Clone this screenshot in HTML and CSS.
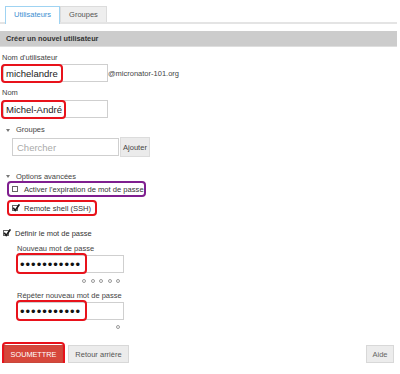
FILE: index.html
```html
<!DOCTYPE html>
<html lang="fr">
<head>
<meta charset="utf-8">
<title>Créer un nouvel utilisateur</title>
<link rel="stylesheet" href="styles.css">
</head>
<body>
<div class="page">
  <div class="tabs">
    <div class="tab active">Utilisateurs</div>
    <div class="tab">Groupes</div>
  </div>
  <div class="header">Créer un nouvel utilisateur</div>
  <div class="form">
    <div class="label l-user">Nom d'utilisateur</div>
    <div class="row r-user">
      <span class="field">
        <input class="input w-user" type="text" value="michelandre">
        <span class="hl hl-user"></span>
      </span>
      <span class="domain">@micronator-101.org</span>
    </div>
    <div class="label l-nom">Nom</div>
    <div class="row r-nom">
      <span class="field">
        <input class="input w-user" type="text" value="Michel-André">
        <span class="hl hl-nom"></span>
      </span>
    </div>

    <div class="section s-groupes"><span class="tri"></span>Groupes</div>
    <div class="groupes-row">
      <input class="input search" type="text" placeholder="Chercher">
      <button class="btn btn-add" type="button">Ajouter</button>
    </div>

    <div class="section s-options"><span class="tri"></span>Options avancées</div>
    <div class="opt opt-purple"><span class="cb"></span>Activer l'expiration de mot de passe</div>
    <div class="opt opt-red"><span class="cb"><svg viewBox="0 0 8 8" width="8" height="8"><path d="M1.2 3.8 L3.2 6.4 L7.4 0.4" fill="none" stroke="#1a1a1a" stroke-width="1.7"/></svg></span>Remote shell (SSH)</div>

    <div class="setpw"><span class="cb"><svg viewBox="0 0 8 8" width="8" height="8"><path d="M1.2 3.8 L3.2 6.4 L7.4 0.4" fill="none" stroke="#1a1a1a" stroke-width="1.7"/></svg></span>Définir le mot de passe</div>

    <div class="pw">
      <div class="label l-pw1">Nouveau mot de passe</div>
      <div class="row r-pw1">
        <span class="field">
          <input class="input pass" type="password" value="michelandre">
          <span class="hl hl-pw"></span>
        </span>
      </div>
      <div class="strength s1"><i></i><i></i><i></i><i></i><i></i></div>
      <div class="label l-pw2">Répéter nouveau mot de passe</div>
      <div class="row r-pw2">
        <span class="field">
          <input class="input pass" type="password" value="michelandre">
          <span class="hl hl-pw"></span>
        </span>
      </div>
      <div class="strength s2"><i></i></div>
    </div>

    <div class="actions">
      <span class="field">
        <button class="btn btn-submit" type="button">SOUMETTRE</button>
        <span class="hl hl-submit"></span>
      </span>
      <button class="btn btn-back" type="button">Retour arrière</button>
      <button class="btn btn-help" type="button">Aide</button>
    </div>
  </div>
</div>
</body>
</html>
```

FILE: styles.css
```css
* { box-sizing: border-box; }
html, body { margin: 0; padding: 0; background: #fff; }
body {
  font-family: "Liberation Sans", Arial, sans-serif;
  font-size: 7.5px;
  color: #333;
}
.page { width: 397px; }

/* tabs */
.tabs {
  display: flex;
  padding: 6px 0 0 5px;
  border-bottom: 2px solid #e4e4e4;
}
.tab {
  height: 16px;
  line-height: 16px;
  padding: 0 8px;
  border: 1px solid #dcdcdc;
  border-bottom: none;
  background: #eeeeee;
  color: #555;
  font-size: 7.5px;
}
.tab.active {
  height: 18px;
  margin-bottom: -2px;
  background: #fff;
  border-color: #9fd3f2;
  color: #3d8fd0;
}

/* header */
.header {
  margin-top: 7px;
  height: 16px;
  line-height: 16px;
  padding-left: 6px;
  background: #cccccc;
  border-bottom: 1px solid #dedede;
  font-weight: bold;
  font-size: 7.3px;
  color: #333;
}

.form { padding-left: 3px; }

.label {
  height: 10px;
  line-height: 10px;
  color: #444;
}
.l-user { margin-top: 6px; margin-left: -1px; }
.l-nom { margin-top: 6px; margin-left: -1px; }

.row { display: flex; align-items: center; }
.r-user { margin-top: 1px; }
.r-nom { margin-top: 2px; }

.field { position: relative; display: inline-block; }

.input {
  display: block;
  height: 18px;
  border: 1px solid #cfcfcf;
  padding: 0 2px;
  font-family: "Liberation Sans", Arial, sans-serif;
  font-size: 9.5px;
  color: #222;
  background: #fff;
  outline: none;
  margin: 0;
}
.w-user { width: 105px; }
.domain { margin-left: 0; color: #444; }

.hl {
  position: absolute;
  border: 2.5px solid #e8121b;
  border-radius: 4px;
  pointer-events: none;
}
.hl-user { left: -2px; top: 0; width: 62px; height: 19px; }
.hl-nom { left: -2px; top: 0; width: 65px; height: 19px; }
.hl-pw { left: -1px; top: -2px; width: 71px; height: 21px; }
.hl-submit { left: -2px; top: -3px; width: 63px; height: 24px; }

/* collapsible sections */
.section {
  display: flex;
  align-items: center;
  height: 10px;
  line-height: 10px;
  padding-left: 3px;
  color: #444;
}
.tri {
  width: 0;
  height: 0;
  border-left: 2px solid transparent;
  border-right: 2px solid transparent;
  border-top: 3px solid #777;
  margin-right: 6px;
}
.s-groupes { margin-top: 7px; }
.s-options { margin-top: 15px; height: 9px; }

.groupes-row {
  display: flex;
  align-items: center;
  margin-top: 2px;
  padding-left: 9px;
}
.search {
  width: 107px;
  height: 18px;
  padding-left: 4px;
}
.search::placeholder { color: #aaa; }

.btn {
  font-family: "Liberation Sans", Arial, sans-serif;
  font-size: 7.5px;
  margin: 0;
  cursor: pointer;
}
.btn-add {
  width: 30px;
  height: 20px;
  margin-left: 1px;
  padding: 0;
  background: #ebebeb;
  border: 1px solid #dcdcdc;
  color: #444;
}

/* option checkboxes */
.opt {
  display: flex;
  align-items: center;
  margin-left: 4px;
  height: 16px;
  padding-left: 3px;
  border-radius: 4px;
  color: #333;
  font-size: 7.6px;
}
.opt-purple { width: 139px; border: 2.5px solid #7f1f8f; }
.opt-red { width: 90px; margin-top: 3px; border: 2.5px solid #e8121b; }

.cb {
  position: relative;
  display: inline-block;
  width: 6px;
  height: 6px;
  border: 1px solid #666;
  background: #fff;
  margin-right: 6px;
  flex: none;
}
.cb svg { position: absolute; left: -1px; top: -2px; display: block; }

.setpw {
  display: flex;
  align-items: center;
  height: 10px;
  margin-top: 12px;
  color: #333;
}
.setpw .cb { margin-right: 6px; }

.pw { padding-left: 14px; }
.l-pw1 { margin-top: 6px; }
.r-pw1 { margin-top: 1px; }
.l-pw2 { margin-top: 8px; }
.r-pw2 { margin-top: 1px; }
.pass {
  width: 107px;
  font-size: 13px;
  letter-spacing: 1px;
  padding-left: 2px;
  color: #111;
}

.strength {
  display: flex;
  justify-content: flex-end;
  width: 103px;
  height: 4px;
  gap: 4.5px;
}
.strength i {
  display: block;
  width: 4px;
  height: 4px;
  border: 1px solid #9a9a9a;
  border-radius: 50%;
}
.s1 { margin-top: 6px; }
.s2 { margin-top: 5px; }

/* actions */
.actions {
  display: flex;
  align-items: center;
  margin-top: 16px;
  padding-left: 1px;
  width: 391px;
}
.btn-submit {
  display: block;
  width: 59px;
  height: 18px;
  padding: 0;
  background: #d6473b;
  border: 1px solid #c9473b;
  color: #fff;
  font-size: 7.3px;
}
.btn-back {
  width: 61px;
  height: 18px;
  margin-left: 5px;
  padding: 0;
  background: #ececec;
  border: 1px solid #d8d8d8;
  color: #555;
}
.btn-help {
  width: 28px;
  height: 18px;
  margin-left: auto;
  padding: 0;
  background: #ececec;
  border: 1px solid #d8d8d8;
  color: #666;
}
```
